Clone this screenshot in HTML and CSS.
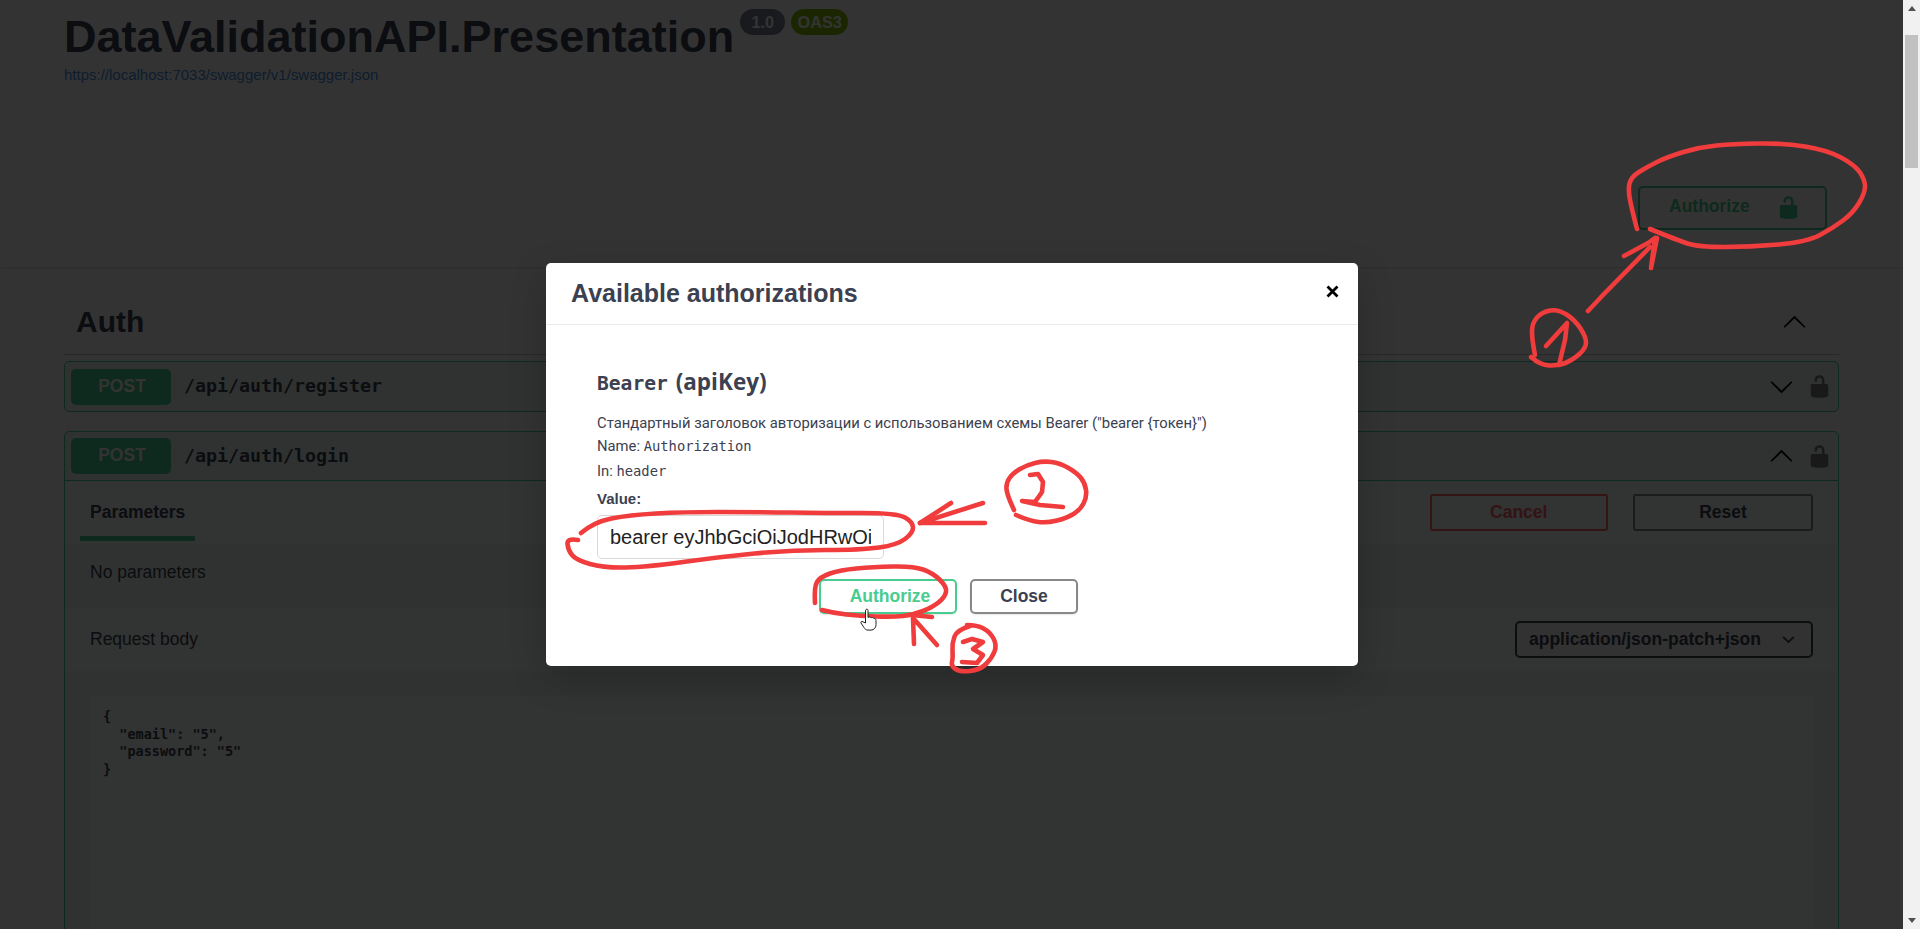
FILE: index.html
```html
<!DOCTYPE html>
<html lang="en">
<head>
<meta charset="utf-8">
<title>Swagger UI</title>
<link rel="stylesheet" href="styles.css">
</head>
<body>
<div class="window">
  <main class="page">
    <section class="info">
      <div class="title-row">
        <h1 class="title">DataValidationAPI.Presentation</h1>
        <span class="pill pill-version">1.0</span>
        <span class="pill pill-oas">OAS3</span>
      </div>
      <a class="spec-link">https://localhost:7033/swagger/v1/swagger.json</a>
    </section>

    <section class="scheme">
      <button class="btn-authorize" type="button">
        <span>Authorize</span>
        <svg class="icon-lock icon-lock-green" viewBox="0 0 20 20"><path d="M15.8 8H14V5.6C14 2.703 12.665 1 10 1 7.334 1 6 2.703 6 5.6V6h2v-.801C8 3.754 8.797 3 10 3c1.203 0 2 .754 2 2.199V8H4c-.553 0-1 .646-1 1.199V17c0 .549.428 1.139.951 1.307l1.197.387C5.672 18.861 6.55 19 7.1 19h5.8c.549 0 1.428-.139 1.951-.307l1.196-.387c.524-.167.953-.757.953-1.306V9.199C17 8.646 16.352 8 15.8 8z"/></svg>
      </button>
    </section>

    <section class="content">
      <header class="tag">
        <h3 class="tag-name">Auth</h3>
        <svg class="icon-arrow icon-up tag-arrow" viewBox="0 0 20 20"><path d="M17.418 6.109c.272-.268.709-.268.979 0s.271.701 0 .969l-7.908 7.83c-.27.268-.707.268-.979 0l-7.908-7.83c-.27-.268-.27-.701 0-.969.271-.268.709-.268.979 0L10 13.25l7.418-7.141z"/></svg>
      </header>

      <article class="op">
        <div class="op-summary">
          <span class="op-method">POST</span>
          <span class="op-path">/api/auth/register</span>
          <svg class="icon-arrow" viewBox="0 0 20 20"><path d="M17.418 6.109c.272-.268.709-.268.979 0s.271.701 0 .969l-7.908 7.83c-.27.268-.707.268-.979 0l-7.908-7.83c-.27-.268-.27-.701 0-.969.271-.268.709-.268.979 0L10 13.25l7.418-7.141z"/></svg>
          <svg class="icon-lock" viewBox="0 0 20 20"><path d="M15.8 8H14V5.6C14 2.703 12.665 1 10 1 7.334 1 6 2.703 6 5.6V6h2v-.801C8 3.754 8.797 3 10 3c1.203 0 2 .754 2 2.199V8H4c-.553 0-1 .646-1 1.199V17c0 .549.428 1.139.951 1.307l1.197.387C5.672 18.861 6.55 19 7.1 19h5.8c.549 0 1.428-.139 1.951-.307l1.196-.387c.524-.167.953-.757.953-1.306V9.199C17 8.646 16.352 8 15.8 8z"/></svg>
        </div>
      </article>

      <article class="op op-open">
        <div class="op-summary op-summary-open">
          <span class="op-method">POST</span>
          <span class="op-path">/api/auth/login</span>
          <svg class="icon-arrow icon-up" viewBox="0 0 20 20"><path d="M17.418 6.109c.272-.268.709-.268.979 0s.271.701 0 .969l-7.908 7.83c-.27.268-.707.268-.979 0l-7.908-7.83c-.27-.268-.27-.701 0-.969.271-.268.709-.268.979 0L10 13.25l7.418-7.141z"/></svg>
          <svg class="icon-lock" viewBox="0 0 20 20"><path d="M15.8 8H14V5.6C14 2.703 12.665 1 10 1 7.334 1 6 2.703 6 5.6V6h2v-.801C8 3.754 8.797 3 10 3c1.203 0 2 .754 2 2.199V8H4c-.553 0-1 .646-1 1.199V17c0 .549.428 1.139.951 1.307l1.197.387C5.672 18.861 6.55 19 7.1 19h5.8c.549 0 1.428-.139 1.951-.307l1.196-.387c.524-.167.953-.757.953-1.306V9.199C17 8.646 16.352 8 15.8 8z"/></svg>
        </div>
        <div class="band band-tabs">
          <span class="tab">Parameters</span>
          <div class="try-actions">
            <button class="btn-cancel" type="button">Cancel</button>
            <button class="btn-reset" type="button">Reset</button>
          </div>
        </div>
        <div class="no-params">No parameters</div>
        <div class="band band-request">
          <span class="request-label">Request body</span>
          <div class="select">
            <span>application/json-patch+json</span>
            <svg class="icon-select" viewBox="0 0 20 20"><path d="M13.418 7.859a.695.695 0 01.978 0 .68.68 0 010 .969l-3.908 3.83a.697.697 0 01-.979 0l-3.908-3.83a.68.68 0 010-.969.695.695 0 01.978 0L10 11l3.418-3.141z"/></svg>
          </div>
        </div>
        <div class="body-wrap">
<pre class="code">{
  "email": "5",
  "password": "5"
}</pre>
        </div>
      </article>
    </section>

    <div class="backdrop">
      <div class="modal">
        <header class="modal-head">
          <h3 class="modal-title">Available authorizations</h3>
          <svg class="icon-close" viewBox="0 0 13 13"><path d="M1.500 1.500l10 10M11.500 1.500l-10 10"/></svg>
        </header>
        <div class="modal-body">
          <h4 class="auth-name"><code class="auth-code">Bearer</code> (apiKey)</h4>
          <p class="auth-desc">Стандартный заголовок авторизации с использованием схемы Bearer ("bearer {токен}")</p>
          <p class="auth-line auth-line-name">Name: <code class="auth-mono">Authorization</code></p>
          <p class="auth-line auth-line-in">In: <code class="auth-mono">header</code></p>
          <label class="auth-label">Value:</label>
          <input class="auth-input" type="text" value="bearer eyJhbGciOiJodHRwOi" readonly>
          <div class="auth-actions">
            <button class="btn-modal-auth" type="button">Authorize</button>
            <button class="btn-modal-close" type="button">Close</button>
          </div>
        </div>
      </div>
    </div>

    <svg class="marks" viewBox="0 0 1903 929">
      <path d="M1637,229 Q1632,210 1630,200 Q1628,190 1629.5,183.5 Q1631,177 1639,172 Q1647,167 1657,162 Q1667,157 1683.5,152 Q1700,147 1716.5,145.5 Q1733,144 1758,143.5 Q1783,143 1805,146.5 Q1827,150 1841,157.5 Q1855,165 1860,172.5 Q1865,180 1865,186.5 Q1865,193 1859,203 Q1853,213 1843,220.5 Q1833,228 1820,235 Q1807,242 1778.5,244.5 Q1750,247 1724,247 Q1698,247 1687.5,243.5 Q1677,240 1650,229"/>
      <polyline points="1588,311 1603,295 1650,247"/>
      <polyline points="1624,256 1648,243 1655,238 1651,268 1657,238"/>
      <path d="M1535,355 Q1532,340 1532,331.5 Q1532,323 1537,317.5 Q1542,312 1550,310.5 Q1558,309 1566.5,314.5 Q1575,320 1580.5,328.5 Q1586,337 1586,342.5 Q1586,348 1579.5,354 Q1573,360 1565.5,363 Q1558,366 1549,365.5 Q1540,365 1531,357"/>
      <polyline points="1546,346 1567,323 1565,340 1559,365"/>
      <path d="M581,533 Q594,522 611.5,518.5 Q629,515 656,513.5 Q683,512 718.5,512 Q754,512 790,512.5 Q826,513 861.5,513 Q897,513 905,517.5 Q913,522 913,527.5 Q913,533 905,539 Q897,545 879,547.5 Q861,550 825.5,550 Q790,550 754.5,553.5 Q719,557 683,562 Q647,567 625.5,567.5 Q604,568 590,564 Q576,560 572,555 Q568,550 567.5,544 Q567,538 578,540"/>
      <polyline points="983,503 920,523 985,523"/>
      <polyline points="951,503 920,523"/>
      <path d="M1014,510 Q1007,495 1006.5,489 Q1006,483 1009.5,478 Q1013,473 1020,469 Q1027,465 1035,463 Q1043,461 1051.5,462 Q1060,463 1068.5,468 Q1077,473 1081,478 Q1085,483 1086,490 Q1087,497 1083.5,503.5 Q1080,510 1073.5,514 Q1067,518 1057,520.5 Q1047,523 1038.5,522 Q1030,521 1016,515"/>
      <polyline points="1030,475 1038,474 1043,482 1042,492 1035,502 1022,501 1040,505 1063,507"/>
      <path d="M815,603 Q814,587 817,582 Q820,577 830,573.5 Q840,570 856.5,568.5 Q873,567 893,566.5 Q913,566 923,569.5 Q933,573 940,580 Q947,587 946,592 Q945,597 939,602 Q933,607 923,611 Q913,615 903,616 Q893,617 876.5,616.5 Q860,616 846.5,614.5 Q833,613 822,610"/>
      <polyline points="912,615 932,617"/>
      <polyline points="914,644 913,618 937,645"/>
      <path d="M970,626 Q957,630 954.5,636.5 Q952,643 952.5,650.5 Q953,658 952,662 Q951,666 955.5,669 Q960,672 970,671 Q980,670 986,664 Q992,658 994.5,651.5 Q997,645 993.5,638.5 Q990,632 983.5,628.5 Q977,625 967,625"/>
      <polyline points="963,642 972,639 983,642 973,649 983,655 977,663 962,662"/>
    </svg>

    <svg class="cursor" viewBox="0 0 17 23"><path d="M6 1.5c1-.8 2-.3 2 1v7c1-1 2.500-.6 3 .3 1-.6 2.500-.2 3 .8 1-.3 2 .4 2 2v4c0 3-2 5.500-5 5.500H8c-2 0-3-1-4-2.500L1 15c-.6-1 .6-2.200 2-1.200L5.500 15V3c0-.6.100-1.100.5-1.500z"/></svg>
  </main>

  <aside class="scrollbar">
    <span class="scroll-arrow scroll-arrow-up"></span>
    <span class="scroll-thumb"></span>
    <span class="scroll-arrow scroll-arrow-down"></span>
  </aside>
</div>
</body>
</html>
```

FILE: styles.css
```css
* { box-sizing: border-box; }
html, body { margin: 0; height: 929px; overflow: hidden; background: #fff; }
body { font-family: "Liberation Sans", Arial, sans-serif; color: #3b4151; }
h1, h3, h4, p { margin: 0; }
button { font-family: inherit; cursor: pointer; background: transparent; padding: 0; }

.window { display: flex; width: 1920px; height: 929px; }
.page { position: relative; width: 1903px; height: 929px; overflow: hidden; flex: none; }

.info { height: 148px; padding: 11px 64px 0; }
.title-row { display: flex; align-items: flex-start; }
.title { font-size: 45px; font-weight: 700; line-height: 52px; color: #3b4151; }
.pill { display: block; height: 26px; margin-top: -2px; border-radius: 13px; font-size: 16.25px; line-height: 26px; font-weight: 700; color: #fff; text-align: center; }
.pill-version { width: 45px; margin-left: 6px; background: #7d8492; }
.pill-oas { width: 57px; margin-left: 6px; background: #89bf04; }
.spec-link { display: block; margin-top: 3px; font-size: 15px; line-height: 18px; color: #4990e2; }

.scheme { height: 119px; display: flex; justify-content: flex-end; align-items: center; padding-right: 76px; background: #fff; box-shadow: 0 1px 2px rgba(0,0,0,.15); }
.btn-authorize { display: flex; align-items: center; width: 189px; height: 44px; padding-left: 29px; border: 2px solid #49cc90; border-radius: 5px; color: #49cc90; font-size: 17.5px; font-weight: 700; }
.btn-authorize span { margin: 0 26px 2px 0; }

.icon-lock { width: 25px; height: 25px; flex: none; fill: #7d7d7d; }
.icon-lock-green { fill: #49cc90; }
.icon-arrow { width: 25px; height: 25px; flex: none; fill: #000; }
.icon-up { transform: rotate(180deg); }

.content { padding: 0 64px; }
.tag { display: flex; align-items: center; justify-content: space-between; height: 88px; padding: 38px 32px 15px 12px; border-bottom: 1px solid rgba(59,65,81,.3); }
.tag-name { font-size: 30px; line-height: 34px; font-weight: 700; color: #3b4151; }

.op { margin-top: 6px; border: 1px solid #49cc90; border-radius: 5px; background: rgba(73,204,144,.1); }
.op-open { margin-top: 19px; height: 700px; }
.op-summary { display: flex; align-items: center; height: 49px; padding: 0 6px; }
.op-summary-open { border-bottom: 1px solid #49cc90; }
.op-method { width: 100px; height: 36px; padding-left: 2px; border-radius: 5px; background: #49cc90; color: #fff; font-size: 17.5px; font-weight: 700; line-height: 34px; text-align: center; }
.op-path { flex: 1; margin: 0 0 2px 13px; font-family: "DejaVu Sans Mono", "Liberation Mono", monospace; font-size: 18.3px; font-weight: 700; color: #3b4151; }
.op-summary .icon-arrow { margin-right: 13px; }

.band { display: flex; justify-content: space-between; align-items: center; background: rgba(255,255,255,.8); }
.band-tabs { height: 63px; padding: 0 25px 0 15px; }
.tab { align-self: flex-end; margin-bottom: 3px; padding: 7px 10px 0; border-bottom: 5px solid #49cc90; font-size: 17.5px; font-weight: 700; line-height: 48px; color: #3b4151; }
.try-actions { display: flex; gap: 25.5px; }
.btn-cancel, .btn-reset { height: 37px; font-size: 17.5px; font-weight: 700; border-radius: 3px; }
.btn-cancel { width: 177.5px; border: 2px solid #ff6060; color: #ff6060; }
.btn-reset { width: 180px; border: 2px solid #888; color: #3b4151; }

.no-params { height: 64px; padding-left: 25px; font-size: 17.5px; line-height: 56px; color: #3b4151; }

.band-request { height: 63px; padding: 0 25px 0 25px; }
.request-label { font-size: 17.5px; color: #3b4151; }
.select { display: flex; align-items: center; justify-content: space-between; width: 298px; height: 37px; padding: 0 10px 0 12px; border: 2px solid #41444e; border-radius: 5px; font-size: 17.5px; font-weight: 700; color: #3b4151; background: #f7f7f7; }
.icon-select { width: 25px; height: 25px; flex: none; fill: #3b4151; }

.body-wrap { padding: 25px 25px 0; }
.code { height: 400px; margin: 0; padding: 12px 13px; background: rgba(255,255,255,.8); font-family: "DejaVu Sans Mono", "Liberation Mono", monospace; font-size: 13.5px; font-weight: 700; line-height: 17.5px; color: #3b4151; }

.backdrop { position: absolute; top: 0; right: 0; bottom: 0; left: 0; display: flex; justify-content: center; align-items: flex-start; padding-top: 263px; background: rgba(0,0,0,.8); }
.modal { width: 812px; height: 403px; margin-right: -1px; border-radius: 5px; background: #fff; box-shadow: 0 12px 37px rgba(0,0,0,.2); }
.modal-head { display: flex; align-items: center; justify-content: space-between; height: 62px; padding: 0 19px 0 25px; border-bottom: 1px solid #ebebeb; }
.modal-title { font-size: 25px; font-weight: 700; color: #3b4151; }
.icon-close { width: 13px; height: 13px; margin-bottom: 5px; fill: none; stroke: #000; stroke-width: 2.8; }

.modal-body { display: flex; flex-direction: column; align-items: flex-start; padding: 44px 0 0 51px; }
.auth-name { height: 26px; font-family: "Open Sans", sans-serif; font-size: 22.5px; font-weight: 700; line-height: 26px; color: #3b4151; word-spacing: 2px; }
.auth-code { font-family: "DejaVu Sans Mono", monospace; font-size: 19.6px; font-weight: 700; line-height: 1; }
.auth-desc { height: 22px; margin-top: 17px; font-family: Roboto, sans-serif; font-size: 14.8px; line-height: 22px; color: #3b4151; }
.auth-line { height: 22px; font-family: Roboto, sans-serif; font-size: 14.8px; line-height: 22px; color: #3b4151; }
.auth-line-name { margin-top: 1px; }
.auth-line-in { margin-top: 3px; }
.auth-mono { font-family: "DejaVu Sans Mono", monospace; font-size: 13.8px; line-height: 1; }
.auth-label { height: 22px; margin-top: 6px; font-size: 15px; font-weight: 700; line-height: 22px; color: #3b4151; }
.auth-input { width: 287px; height: 44px; margin-top: 5px; padding: 0 12px; border: 1px solid #d9d9d9; border-radius: 5px; background: #fff; font-family: "Liberation Sans", Arial, sans-serif; font-size: 20px; color: #222; outline: none; }
.auth-actions { display: flex; gap: 13px; margin: 20px 0 0 222px; }
.btn-modal-auth, .btn-modal-close { height: 35px; border-radius: 5px; font-size: 17.5px; font-weight: 700; box-shadow: 0 1px 2px rgba(0,0,0,.1); }
.btn-modal-auth { width: 138px; padding-left: 4px; border: 2px solid #49cc90; color: #49cc90; }
.btn-modal-close { width: 108px; border: 2px solid #888; color: #3b4151; }

.marks { position: absolute; top: 0; left: 0; width: 1903px; height: 929px; pointer-events: none; }
.marks path, .marks polyline { fill: none; stroke: #f03c3c; stroke-width: 4.6; stroke-linecap: round; stroke-linejoin: round; }
.cursor { position: absolute; left: 860px; top: 608px; width: 17px; height: 23px; fill: #fff; stroke: #222; stroke-width: 1; }

.scrollbar { position: relative; display: flex; flex-direction: column; align-items: center; width: 17px; height: 929px; background: #f1f1f1; }
.scroll-arrow { width: 0; height: 0; border-left: 4px solid transparent; border-right: 4px solid transparent; }
.scroll-arrow-up { margin-top: 6px; border-bottom: 5px solid #505050; }
.scroll-arrow-down { margin-top: auto; margin-bottom: 6px; border-top: 5px solid #505050; }
.scroll-thumb { width: 13px; height: 133px; margin: 24px 0 0; background: #c1c1c1; }
```
